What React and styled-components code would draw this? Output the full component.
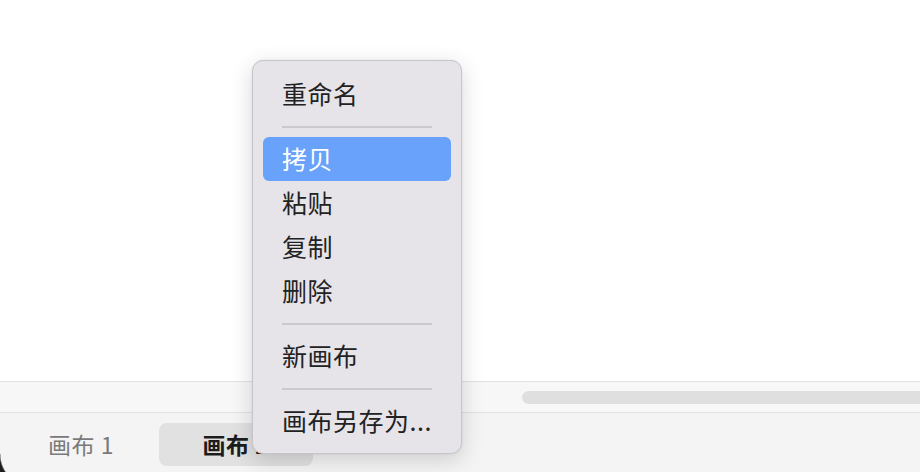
import React from 'react';
import styled, { createGlobalStyle } from 'styled-components';

const GlobalStyle = createGlobalStyle`
  html, body {
    margin: 0;
    padding: 0;
    background: #ffffff;
  }
  body {
    font-family: "Noto Sans CJK SC", "Noto Sans", "Liberation Sans", sans-serif;
  }
`;

const Window = styled.div`
  position: relative;
  width: 920px;
  height: 472px;
  display: flex;
  flex-direction: column;
  overflow: hidden;
  background: #ffffff;
`;

const Canvas = styled.div`
  flex: 1;
  background: #ffffff;
`;

const ScrollTrack = styled.div`
  height: 30px;
  display: flex;
  align-items: center;
  padding-left: 522px;
  background: #f7f7f7;
  border-top: 1px solid #e2e2e2;
  border-bottom: 1px solid #e2e2e2;
`;

const ScrollThumb = styled.div`
  flex: 1;
  height: 13px;
  margin-top: 1px;
  border-radius: 7px 0 0 7px;
  background: #dfdfdf;
`;

const TabBar = styled.div`
  height: 59px;
  display: flex;
  align-items: center;
  gap: 1px;
  padding-left: 4px;
  background: #f4f4f4;
`;

const Tab = styled.div`
  width: 154px;
  height: 43px;
  margin-top: 3px;
  padding-bottom: 1px;
  box-sizing: border-box;
  display: flex;
  align-items: center;
  justify-content: center;
  border-radius: 8px;
  font-size: 23px;
  letter-spacing: 0.5px;
  color: ${(p) => (p.$active ? '#1c1c1c' : '#7a7a7a')};
  font-weight: ${(p) => (p.$active ? 700 : 400)};
  background: ${(p) => (p.$active ? '#e1e1e1' : 'transparent')};
`;

const AddButton = styled.div`
  width: 54px;
  height: 43px;
  margin-top: 3px;
  display: flex;
  align-items: center;
  justify-content: center;
  color: #333;
`;

const CornerShade = styled.div`
  position: absolute;
  left: 0;
  bottom: 0;
  width: 8px;
  height: 18px;
  background: radial-gradient(circle 30px at 30px 1px, transparent 29px, #1e1e1e 30.5px);
`;

const Menu = styled.div`
  position: absolute;
  left: 252px;
  top: 60px;
  width: 208px;
  padding: 11px 0 10px;
  box-sizing: content-box;
  background: #e6e4e9;
  border: 1px solid #c6c5c9;
  border-radius: 11px;
  box-shadow: 0 6px 22px rgba(0, 0, 0, 0.16), 0 0 2px rgba(0, 0, 0, 0.08);
`;

const Item = styled.div`
  height: 44px;
  margin: 0 10px;
  padding: 0 0 3px 19px;
  box-sizing: border-box;
  display: flex;
  align-items: center;
  border-radius: 6px;
  font-size: 25px;
  letter-spacing: 0.5px;
  color: ${(p) => (p.$selected ? '#ffffff' : '#222222')};
  background: ${(p) => (p.$selected ? '#68a2fb' : 'transparent')};
`;

const Separator = styled.div`
  height: 2px;
  margin: 10px 29px 9px;
  background: #cac9cd;
`;

const menu = [
  { label: '重命名' },
  { sep: true },
  { label: '拷贝', selected: true },
  { label: '粘贴' },
  { label: '复制' },
  { label: '删除' },
  { sep: true },
  { label: '新画布' },
  { sep: true },
  { label: '画布另存为...' },
];

export default function App() {
  return (
    <>
      <GlobalStyle />
      <Window>
        <Canvas />
        <ScrollTrack>
          <ScrollThumb />
        </ScrollTrack>
        <TabBar>
          <Tab>画布 1</Tab>
          <Tab $active>画布 2</Tab>
          <AddButton>
            <svg width="18" height="18" viewBox="0 0 18 18">
              <path d="M9 2v14M2 9h14" stroke="#333" strokeWidth="2" strokeLinecap="round" />
            </svg>
          </AddButton>
        </TabBar>
        <CornerShade />
        <Menu>
          {menu.map((m, i) =>
            m.sep ? (
              <Separator key={i} />
            ) : (
              <Item key={i} $selected={m.selected}>
                {m.label}
              </Item>
            )
          )}
        </Menu>
      </Window>
    </>
  );
}
